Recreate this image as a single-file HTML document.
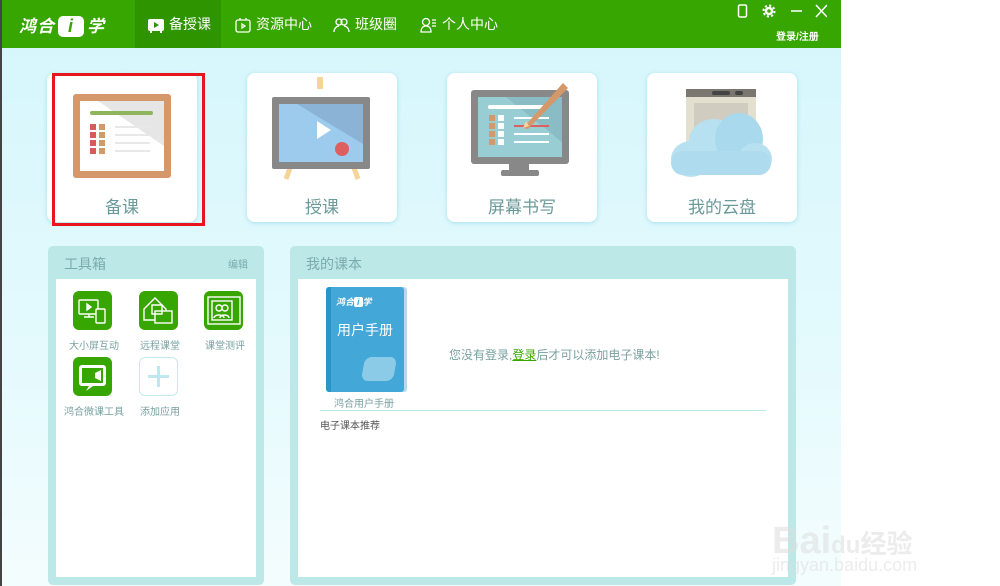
<!DOCTYPE html>
<html><head><meta charset="utf-8"><style>
*{margin:0;padding:0;box-sizing:border-box}
body{width:1000px;height:586px;overflow:hidden;background:#fff;font-family:"Liberation Sans","Noto Sans CJK SC",sans-serif;position:relative}
.app{position:absolute;left:0;top:0;width:841px;height:586px;background:linear-gradient(#d4f6fb,#e4fafd 60%,#f4fdfe);border-left:2px solid #444}
.hdr{position:absolute;left:0;top:0;width:839px;height:48px;background:#38a600}
.logo{position:absolute;left:17px;top:12px;color:#fff;font-style:italic;font-weight:bold;font-size:17px;letter-spacing:1px}
.logo .i{display:inline-block;background:#fff;color:#38a600;border-radius:5px;width:26px;text-align:center;font-size:18px;margin:0 3px}
.tab{position:absolute;top:0;height:48px;line-height:48px;color:#fff;font-size:14px}
.tab svg{vertical-align:-4px;margin-right:5px}
.card{position:absolute;top:73px;width:150px;height:149px;background:#fff;border-radius:8px;box-shadow:0 1px 4px rgba(120,200,220,.5)}
.card .t{position:absolute;left:0;right:0;top:120px;text-align:center;color:#6a9a9a;font-size:17px}
.panel{position:absolute;top:246px;height:339px;background:#bce8e8;border-radius:5px}
.panel .h{position:absolute;left:16px;top:8px;color:#7aabab;font-size:14px}
.panel .in{position:absolute;left:8px;right:8px;top:33px;bottom:8px;background:#fff}
.tool{position:absolute;width:39px;height:39px;background:#38a600;border-radius:6px}
.tl{position:absolute;font-size:10px;color:#7aa0a0;width:80px;text-align:center}
</style></head><body>
<div class="app">
<div class="hdr">
 <div class="logo">鸿合<span class="i">i</span>学</div>
 <div style="position:absolute;left:133px;top:0;width:86px;height:48px;background:#2e9400"></div>
 <div class="tab" style="left:146px"><svg width="16" height="14"><rect x="0" y="0" width="16" height="12" rx="2" fill="#fff"/><path d="M6 3 L11 6 L6 9Z" fill="#2e9400"/><rect x="2" y="12" width="2" height="2" fill="#fff"/><rect x="12" y="12" width="2" height="2" fill="#fff"/></svg>备授课</div>
 <div class="tab" style="left:233px"><svg width="16" height="16" fill="none" stroke="#fff" stroke-width="1.3"><rect x="1" y="3" width="14" height="12" rx="2"/><path d="M5 3V1M11 3V1M7 7l3 2-3 2z"/></svg>资源中心</div>
 <div class="tab" style="left:331px"><svg width="17" height="16" fill="none" stroke="#fff" stroke-width="1.3"><circle cx="6" cy="5" r="3"/><circle cx="11" cy="5" r="3"/><path d="M1 15c0-4 3-6 5-6M16 15c0-4-3-6-5-6"/></svg>班级圈</div>
 <div class="tab" style="left:418px"><svg width="17" height="16" fill="none" stroke="#fff" stroke-width="1.3"><circle cx="6" cy="5" r="3.5"/><path d="M1 15c0-4 2-6 5-6s5 2 5 6zM12 3h4M12 6h4M12 9h4"/></svg>个人中心</div>
 <svg style="position:absolute;left:735px;top:4px" width="90" height="14" fill="none" stroke="#fff" stroke-width="1.5"><rect x="1.5" y="1" width="8" height="12" rx="1.5"/><circle cx="32" cy="7" r="3" stroke-width="2.5"/><circle cx="32" cy="7" r="5.5" stroke-dasharray="2.2 2.1" stroke-width="2"/><path d="M54 7h11M79 1l11 12M90 1l-11 12"/></svg>
 <div style="position:absolute;left:774px;top:28px;color:#fff;font-size:10px;font-weight:bold">登录/注册</div>
</div>

<div class="card" style="left:45px">
 <svg style="position:absolute;left:26px;top:21px" width="100" height="86"><rect x="0" y="0" width="98" height="84" rx="3" fill="#d4986a"/><rect x="7" y="7" width="84" height="70" fill="#fff"/><path d="M25 7h66v45z" fill="#e6e6e6"/><rect x="17" y="17" width="63" height="4" rx="2" fill="#8fb45c"/><g fill="#d85a5a"><rect x="17" y="30" width="6" height="6"/><rect x="17" y="38" width="6" height="6"/><rect x="17" y="46" width="6" height="6"/><rect x="17" y="54" width="6" height="6"/></g><g fill="#d4986a"><rect x="26" y="30" width="6" height="6"/><rect x="26" y="38" width="6" height="6"/><rect x="26" y="46" width="6" height="6"/><rect x="26" y="54" width="6" height="6"/></g><g fill="#e8e8e8"><rect x="42" y="32" width="35" height="2"/><rect x="42" y="40" width="35" height="2"/><rect x="42" y="48" width="35" height="2"/><rect x="42" y="56" width="35" height="2"/></g></svg>
 <div class="t">备课</div></div>
<div style="position:absolute;left:50px;top:73px;width:153px;height:153px;border:3px solid #e8141e"></div>
<div class="card" style="left:245px">
 <svg style="position:absolute;left:25px;top:4px" width="100" height="110"><rect x="45" y="0" width="6" height="12" fill="#f5d49a"/><path d="M22 80l-8 22M78 80l8 22" stroke="#f5d49a" stroke-width="5"/><rect x="0" y="20" width="98" height="72" rx="2" fill="#888"/><rect x="7" y="27" width="84" height="58" fill="#9ccbee"/><path d="M25 27h66v40z" fill="#8ab3d6"/><path d="M45 44l14 9-14 9z" fill="#fff"/><circle cx="70" cy="72" r="7" fill="#de5f5f"/></svg>
 <div class="t">授课</div></div>
<div class="card" style="left:445px">
 <svg style="position:absolute;left:24px;top:9px" width="105" height="100"><rect x="0" y="8" width="98" height="74" rx="3" fill="#888"/><rect x="7" y="15" width="84" height="60" fill="#98cdd3"/><path d="M35 15h56v45z" fill="#89bcc4"/><rect x="38" y="82" width="20" height="8" fill="#888"/><rect x="30" y="88" width="38" height="6" rx="2" fill="#888"/><rect x="17" y="23" width="60" height="4" rx="2" fill="#fff"/><g fill="#d4986a"><rect x="18" y="33" width="6" height="6"/><rect x="18" y="41" width="6" height="6"/><rect x="18" y="49" width="6" height="6"/><rect x="18" y="57" width="6" height="6"/></g><g fill="#fff"><rect x="27" y="33" width="6" height="6"/><rect x="27" y="41" width="6" height="6"/><rect x="27" y="49" width="6" height="6"/><rect x="27" y="57" width="6" height="6"/><rect x="43" y="35" width="35" height="2"/><rect x="43" y="51" width="35" height="2"/><rect x="43" y="59" width="35" height="2"/></g><rect x="43" y="43" width="35" height="2" fill="#de5f5f"/><path d="M52 46l40-45 5 5-40 41z" fill="#d4986a"/><path d="M52 46l3-7 3 5z" fill="#f5d49a"/></svg>
 <div class="t">屏幕书写</div></div>
<div class="card" style="left:645px">
 <svg style="position:absolute;left:22px;top:16px" width="108" height="100"><rect x="17" y="0" width="70" height="80" fill="#e4e0d0"/><rect x="17" y="0" width="70" height="8" fill="#7a7670"/><rect x="43" y="2" width="18" height="4" rx="2" fill="#444"/><rect x="66" y="2" width="8" height="4" rx="2" fill="#444"/><rect x="25" y="14" width="54" height="40" fill="#d0ccc0"/><ellipse cx="22" cy="70" rx="20" ry="18" fill="#b7e1f0"/><ellipse cx="45" cy="52" rx="25" ry="22" fill="#b7e1f0"/><ellipse cx="70" cy="50" rx="24" ry="26" fill="#a8d9ec"/><ellipse cx="86" cy="70" rx="17" ry="16" fill="#b7e1f0"/><rect x="2" y="62" width="100" height="24" rx="12" fill="#aedcee"/></svg>
 <div class="t">我的云盘</div></div>

<div class="panel" style="left:46px;width:216px"><div class="h">工具箱</div><div style="position:absolute;right:16px;top:10px;font-size:10px;color:#7aabab">编辑</div><div class="in"></div></div>
<div class="tool" style="left:71px;top:291px"><svg width="39" height="39" fill="none" stroke="#fff" stroke-width="1.4"><rect x="6" y="9" width="19" height="14" rx="1"/><path d="M11 26h10M16 23v3"/><rect x="23" y="18" width="9" height="14" rx="1" fill="#38a600"/><path d="M14 13l4 3-4 3z" fill="#fff"/></svg></div>
<div class="tool" style="left:137px;top:291px"><svg width="39" height="39" fill="none" stroke="#fff" stroke-width="1.4"><path d="M5 18L16 7l11 11v11H5z"/><rect x="16" y="20" width="17" height="12" fill="#38a600"/><path d="M13 14h10v9H13z"/></svg></div>
<div class="tool" style="left:202px;top:291px"><svg width="39" height="39" fill="none" stroke="#fff" stroke-width="1.4"><rect x="4" y="6" width="32" height="27"/><rect x="8" y="10" width="20" height="19"/><circle cx="15" cy="17" r="3"/><circle cx="21" cy="17" r="3"/><path d="M10 27c0-4 10-4 10 0M16 27c0-4 9-4 9 0"/></svg></div>
<div class="tl" style="left:52px;top:337px">大小屏互动</div>
<div class="tl" style="left:118px;top:337px">远程课堂</div>
<div class="tl" style="left:183px;top:337px">课堂测评</div>
<div class="tool" style="left:71px;top:357px"><svg width="39" height="39"><rect x="6" y="8" width="27" height="21" rx="3" fill="#fff"/><rect x="9" y="11" width="21" height="15" fill="#38a600"/><path d="M16 29l-3 5 7-5z" fill="#fff"/><path d="M22 16l6-3v11l-6-3z" fill="#fff"/></svg></div>
<div class="tool" style="left:137px;top:357px;background:#fff;border:1px solid #c4eaf0"><svg width="37" height="37"><path d="M18.5 8v21M8 18.5h21" stroke="#bfe7ef" stroke-width="3"/></svg></div>
<div class="tl" style="left:52px;top:403px">鸿合微课工具</div>
<div class="tl" style="left:118px;top:403px">添加应用</div>

<div class="panel" style="left:288px;width:506px"><div class="h">我的课本</div><div class="in"></div></div>
<div style="position:absolute;left:324px;top:287px;width:81px;height:105px;background:#bbd8e8;border-radius:3px"></div>
<div style="position:absolute;left:324px;top:287px;width:78px;height:105px;background:#43a8d8;border-radius:3px;border-left:5px solid #2b95c8">
 <div style="position:absolute;left:5px;top:8px;color:#fff;font-size:9px;font-style:italic;font-weight:bold">鸿合<span style="background:#fff;color:#43a8d8;padding:0 3px;border-radius:2px">i</span>学</div>
 <div style="position:absolute;left:6px;top:33px;color:#fff;font-size:14px">用户手册</div>
 <div style="position:absolute;left:32px;top:70px;width:32px;height:24px;background:#8ccbe8;border-radius:7px;transform:skewX(-10deg)"></div>
</div>
<div style="position:absolute;left:332px;top:395px;font-size:10px;color:#7aa0a0">鸿合用户手册</div>
<div style="position:absolute;left:447px;top:346px;font-size:12px;color:#7aa0a0">您没有登录,<u style="color:#38a600">登录</u>后才可以添加电子课本!</div>
<div style="position:absolute;left:318px;top:410px;width:446px;height:1px;background:#bce8e8"></div>
<div style="position:absolute;left:318px;top:417px;font-size:10px;color:#555">电子课本推荐</div>
</div>
<div style="position:absolute;left:772px;top:520px;color:rgba(220,220,220,.55);font-size:38px;font-weight:bold">Bai<span style="font-size:24px">du</span><span style="font-size:26px">经验</span></div>
<div style="position:absolute;left:772px;top:555px;color:rgba(220,220,220,.55);font-size:18px">jingyan.baidu.com</div>
</body></html>
